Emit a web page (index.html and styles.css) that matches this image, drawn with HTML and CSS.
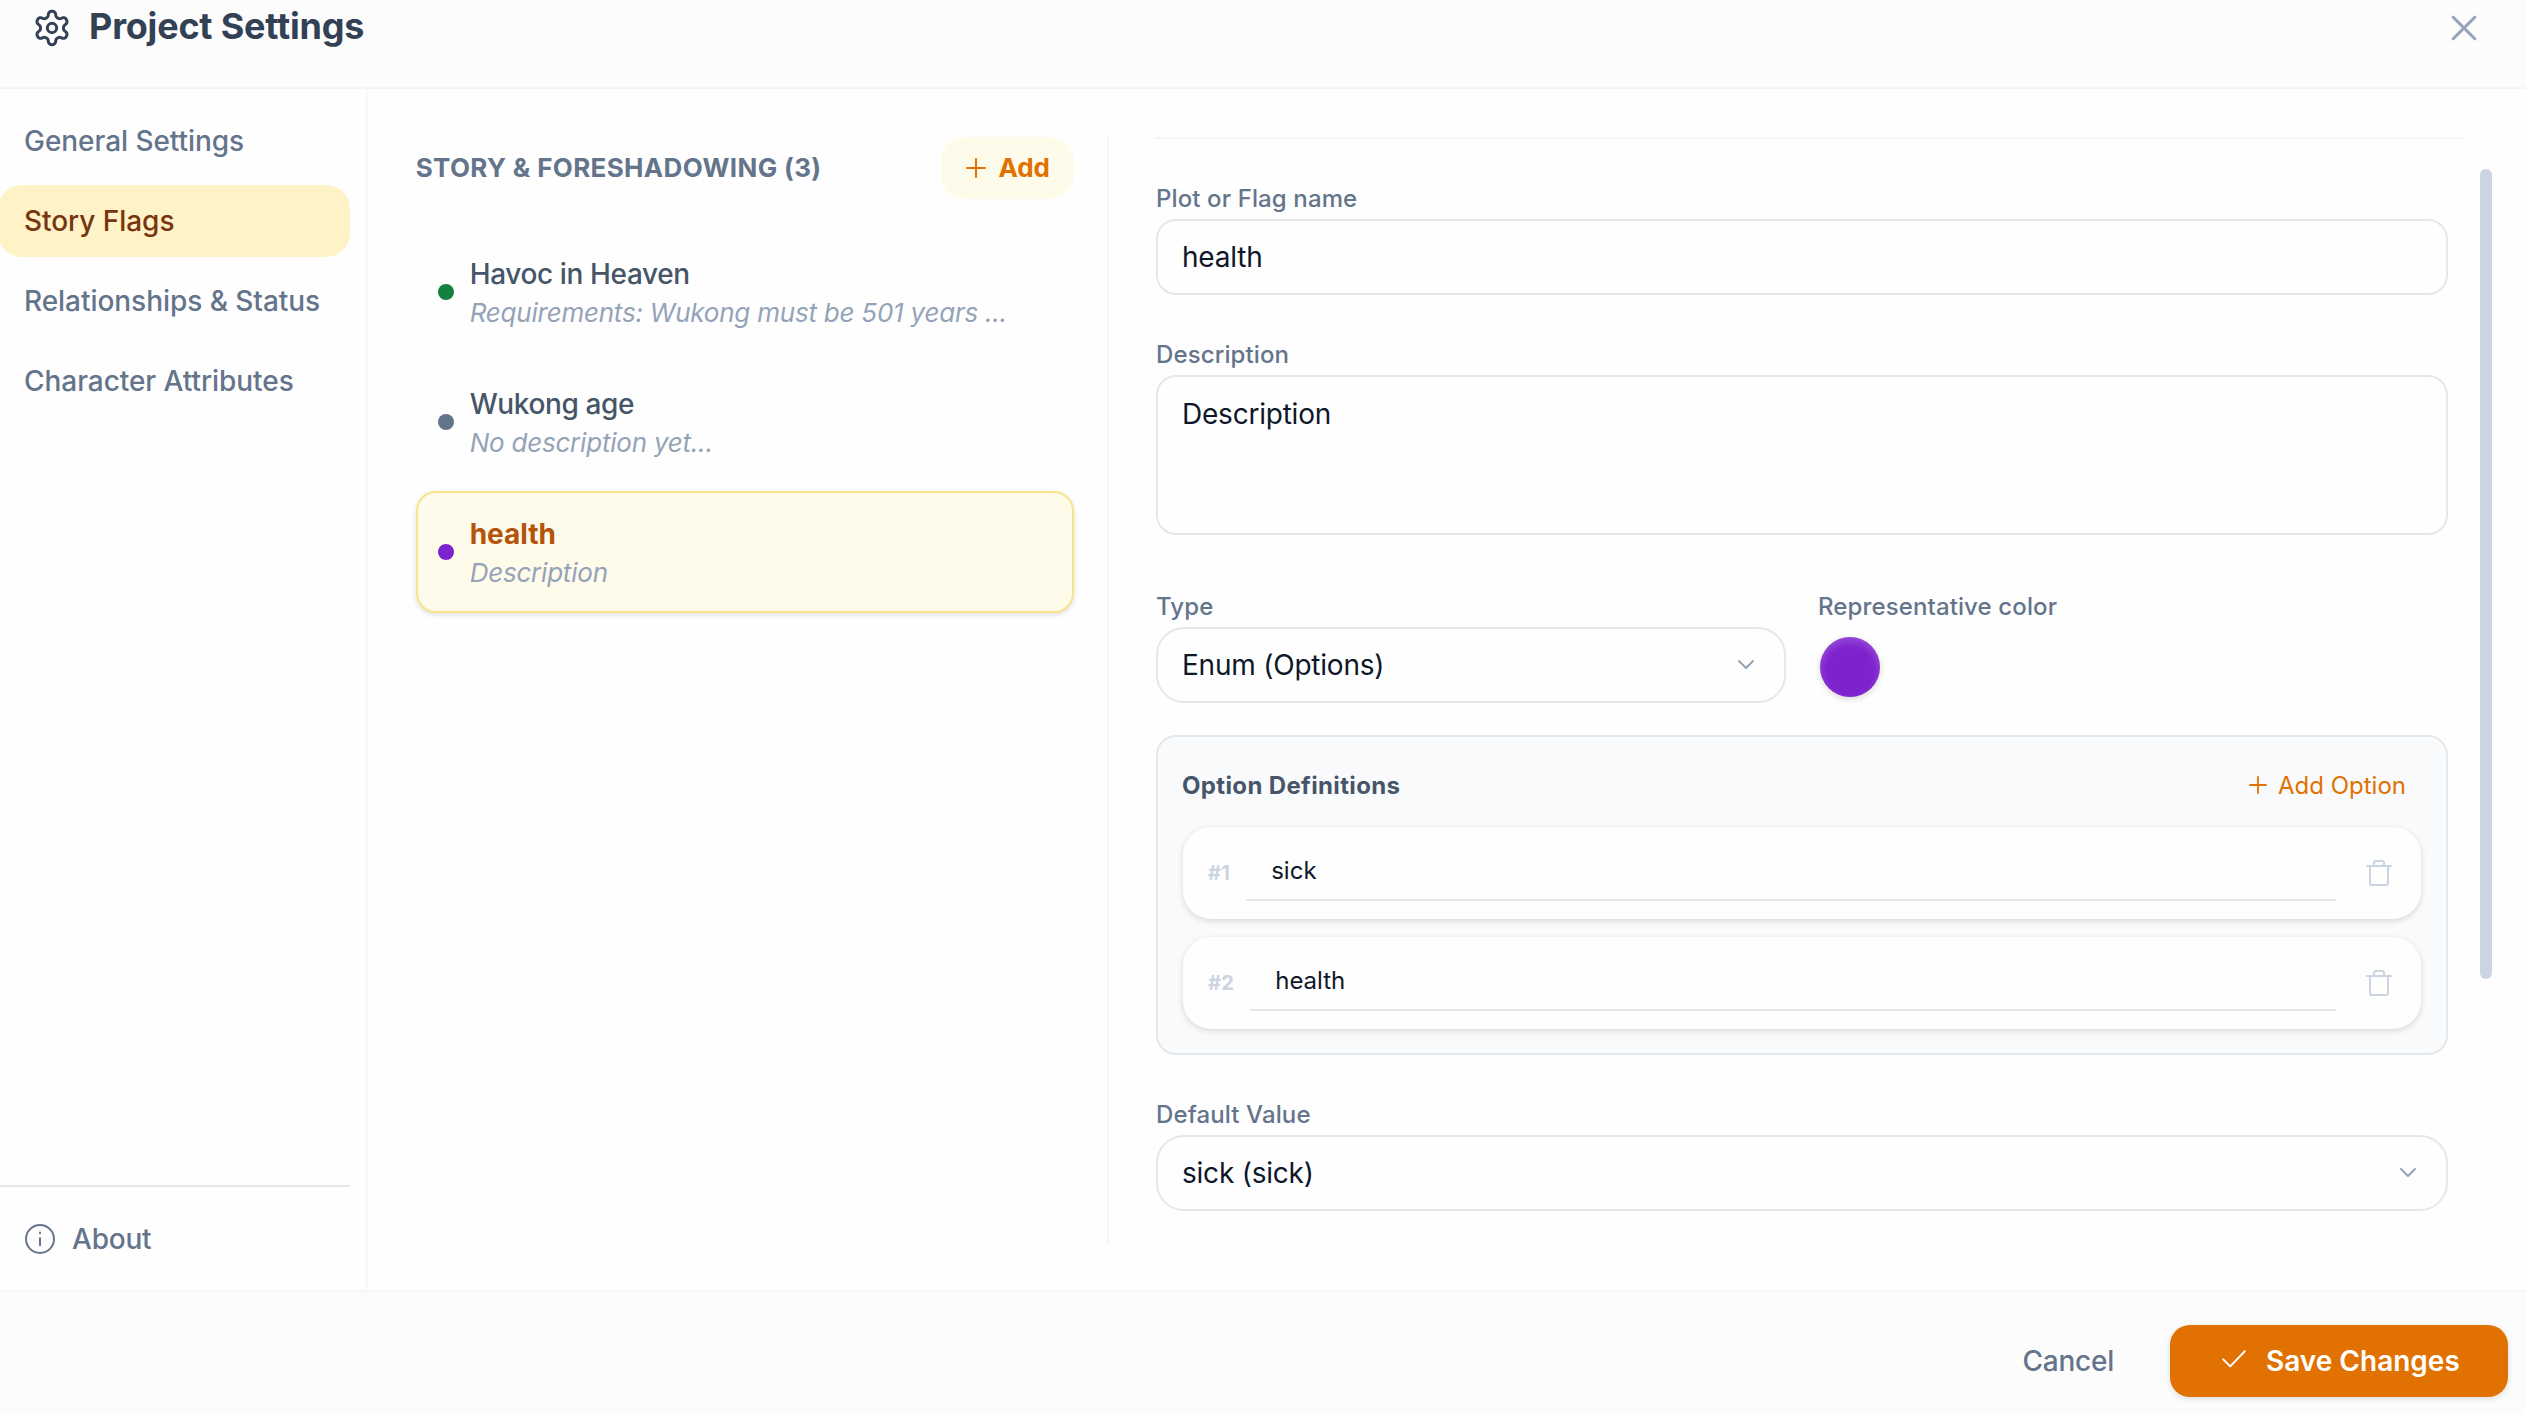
FILE: index.html
```html
<!DOCTYPE html>
<html lang="en">
<head>
  <meta charset="UTF-8">
  <title>Project Settings</title>
  <link rel="stylesheet" href="styles.css">
</head>
<body>

  <header class="header">
    <svg class="icon-gear" viewBox="0 0 24 24">
      <path d="M12.22 2h-.44a2 2 0 0 0-2 2v.18a2 2 0 0 1-1 1.73l-.43.25a2 2 0 0 1-2 0l-.15-.08a2 2 0 0 0-2.73.73l-.22.38a2 2 0 0 0 .73 2.73l.15.1a2 2 0 0 1 1 1.72v.51a2 2 0 0 1-1 1.74l-.15.09a2 2 0 0 0-.73 2.73l.22.38a2 2 0 0 0 2.73.73l.15-.08a2 2 0 0 1 2 0l.43.25a2 2 0 0 1 1 1.73V20a2 2 0 0 0 2 2h.44a2 2 0 0 0 2-2v-.18a2 2 0 0 1 1-1.73l.43-.25a2 2 0 0 1 2 0l.15.08a2 2 0 0 0 2.73-.73l.22-.39a2 2 0 0 0-.73-2.73l-.15-.08a2 2 0 0 1-1-1.74v-.5a2 2 0 0 1 1-1.74l.15-.09a2 2 0 0 0 .73-2.73l-.22-.38a2 2 0 0 0-2.73-.73l-.15.08a2 2 0 0 1-2 0l-.43-.25a2 2 0 0 1-1-1.73V4a2 2 0 0 0-2-2z"/>
      <circle cx="12" cy="12" r="2.8"/>
    </svg>
    <h1>Project Settings</h1>
    <button class="close" aria-label="Close">
      <svg viewBox="0 0 24 24"><path d="M1.2 1.2l21.6 21.6M22.8 1.2L1.2 22.8"/></svg>
    </button>
  </header>

  <main class="main">
    <aside class="sidebar">
      <nav>
        <a class="nav-item">General Settings</a>
        <a class="nav-item active">Story Flags</a>
        <a class="nav-item">Relationships &amp; Status</a>
        <a class="nav-item">Character Attributes</a>
      </nav>
      <div class="about">
        <svg viewBox="0 0 30 30">
          <circle cx="15" cy="15" r="14"/>
          <path d="M15 14.2v7M15 8.6v.6"/>
        </svg>
        <span>About</span>
      </div>
    </aside>

    <section class="flags">
      <div class="flags-head">
        <h2>STORY &amp; FORESHADOWING (3)</h2>
        <button class="add">
          <svg class="plus" viewBox="0 0 18 18"><path d="M9 0v18M0 9h18"/></svg>
          <span>Add</span>
        </button>
      </div>
      <ul class="flag-list">
        <li class="flag">
          <i class="dot green"></i>
          <div class="flag-text">
            <strong>Havoc in Heaven</strong>
            <em>Requirements: Wukong must be 501 years ...</em>
          </div>
        </li>
        <li class="flag">
          <i class="dot slate"></i>
          <div class="flag-text">
            <strong>Wukong age</strong>
            <em>No description yet...</em>
          </div>
        </li>
        <li class="flag selected">
          <i class="dot purple"></i>
          <div class="flag-text">
            <strong>health</strong>
            <em>Description</em>
          </div>
        </li>
      </ul>
    </section>

    <section class="editor">
      <form class="form">
        <div class="field">
          <label for="name">Plot or Flag name</label>
          <input class="control" type="text" id="name" value="health">
        </div>

        <div class="field">
          <label for="description">Description</label>
          <textarea class="control" id="description">Description</textarea>
        </div>

        <div class="field-row">
          <div class="field type">
            <label for="type">Type</label>
            <div class="select">
              <select class="control" id="type"><option>Enum (Options)</option></select>
              <svg viewBox="0 0 16 10"><path d="M1 1l7 7 7-7"/></svg>
            </div>
          </div>
          <div class="field">
            <label>Representative color</label>
            <button type="button" class="swatch" aria-label="Pick a color"></button>
          </div>
        </div>

        <div class="options">
          <div class="options-head">
            <h3>Option Definitions</h3>
            <button type="button" class="add-option">
              <svg class="plus" viewBox="0 0 18 18"><path d="M9 0v18M0 9h18"/></svg>
              <span>Add Option</span>
            </button>
          </div>
          <div class="option">
            <b>#1</b>
            <input type="text" value="sick">
            <svg class="trash" viewBox="0 0 24 26"><path d="M0 6h24M7 6V3q0-2 2-2h6q2 0 2 2v3M3 6v17q0 2 2 2h14q2 0 2-2V6"/></svg>
          </div>
          <div class="option">
            <b>#2</b>
            <input type="text" value="health">
            <svg class="trash" viewBox="0 0 24 26"><path d="M0 6h24M7 6V3q0-2 2-2h6q2 0 2 2v3M3 6v17q0 2 2 2h14q2 0 2-2V6"/></svg>
          </div>
        </div>

        <div class="field">
          <label for="default">Default Value</label>
          <div class="select">
            <select class="control" id="default"><option>sick (sick)</option></select>
            <svg viewBox="0 0 16 10"><path d="M1 1l7 7 7-7"/></svg>
          </div>
        </div>
      </form>
      <div class="scrollbar"><div class="thumb"></div></div>
    </section>
  </main>

  <footer class="footer">
    <button class="cancel">Cancel</button>
    <button class="save">
      <svg viewBox="0 0 24 18"><path d="M1.2 9.4l7 7L22.8 1.2"/></svg>
      <span>Save Changes</span>
    </button>
  </footer>

</body>
</html>
```
FILE: styles.css
```css
/* Base */
* {
  box-sizing: border-box;
}

body {
  margin: 0;
  width: 2526px;
  height: 1414px;
  overflow: hidden;
  display: flex;
  flex-direction: column;
  background-color: #fefefe;
  color: #64748b;
  font-family: Inter, sans-serif;
  font-size: 28px;
  letter-spacing: 0;
}

h1, h2, h3, ul {
  margin: 0;
  padding: 0;
}

button, input, textarea, select {
  font: inherit;
  letter-spacing: inherit;
  color: inherit;
  border: none;
  background: none;
  padding: 0;
  outline: none;
}

svg {
  display: block;
  flex: none;
  overflow: visible;
  fill: none;
  stroke: currentColor;
  stroke-width: 2;
  stroke-linecap: round;
  stroke-linejoin: round;
}

/* Header */
.header {
  height: 89px;
  flex: none;
  display: flex;
  align-items: flex-start;
  padding: 5px 50px 0 32px;
  background-color: #fcfcfd;
  border-bottom: 2px solid #f3f5f7;
  color: #334155;
}

.icon-gear {
  width: 40px;
  height: 40px;
  margin-top: 3px;
  stroke-width: 1.8;
}

h1 {
  margin-left: 17px;
  font-size: 36px;
  line-height: 42px;
  font-weight: 700;
  letter-spacing: -0.2px;
}

.close {
  margin: 11px 0 0 auto;
  color: #94a3b8;
}

.close svg {
  width: 24px;
  height: 24px;
  stroke-width: 3;
}

/* Sidebar */
.main {
  flex: 1;
  display: flex;
  min-height: 0;
}

.sidebar {
  width: 368px;
  padding: 16px 16px 0 0;
  border-right: 2px solid #f5f8f9;
  display: flex;
  flex-direction: column;
  font-weight: 500;
}

nav {
  display: flex;
  flex-direction: column;
  gap: 8px;
  margin-left: -2px;
}

.nav-item {
  height: 72px;
  padding-left: 26px;
  line-height: 73px;
  letter-spacing: -0.05px;
  border-radius: 24px;
}

.nav-item.active {
  background-color: #fef3c7;
  color: #78350f;
}

.about {
  margin-top: auto;
  height: 105px;
  padding: 0 0 0 25px;
  display: flex;
  align-items: center;
  gap: 17px;
  border-top: 2px solid #e5e8ec;
  letter-spacing: -0.2px;
}

.about svg {
  width: 30px;
  height: 30px;
}

/* Flag list */
.flags {
  width: 740px;
  padding: 48px 33px 0 48px;
}

.flags-head {
  display: flex;
  align-items: center;
  justify-content: space-between;
  line-height: 30px;
}

h2 {
  padding-bottom: 1px;
  font-size: 26px;
  font-weight: 700;
  letter-spacing: 0.35px;
}

.add {
  height: 62px;
  padding: 0 24px 1px 26px;
  display: flex;
  align-items: center;
  gap: 13px;
  border-radius: 24px;
  background-color: #fffbeb;
  color: #e17100;
  font-size: 26px;
  font-weight: 700;
}

.plus {
  width: 18px;
  height: 18px;
}

.flag-list {
  margin-top: 32px;
  list-style: none;
  display: flex;
  flex-direction: column;
  gap: 8px;
}

.flag {
  height: 122px;
  padding: 0 20px;
  display: flex;
  align-items: center;
  gap: 16px;
  border: 2px solid transparent;
  border-radius: 20px;
}

.flag.selected {
  background-color: #fffbeb;
  border-color: #f8e48c;
  box-shadow: 0 2px 5px rgba(0, 0, 0, 0.12);
}

.dot {
  width: 16px;
  height: 16px;
  border-radius: 50%;
}

.dot.green { background-color: #15803d; }
.dot.slate { background-color: #64748b; }
.dot.purple { background-color: #7e22ce; }

.flag-text {
  padding-top: 1px;
}

.flag-text strong, .flag-text em {
  display: block;
  line-height: 39px;
}

.flag-text strong {
  color: #475569;
  font-weight: 500;
  letter-spacing: -0.37px;
  line-height: 40px;
}

.flag-text em {
  line-height: 38px;
  color: #94a3b8;
  font-size: 26px;
  letter-spacing: -0.22px;
}

.flag.selected strong {
  color: #b45309;
  font-weight: 700;
  letter-spacing: 0;
}

/* Editor */
.editor {
  flex: 1;
  display: flex;
  margin: 48px 34px 45px 0;
  padding-left: 47px;
  border-left: 2px solid #f3f5f7;
}

.form {
  width: 1309px;
  padding: 44px 17px 0 0;
  border-top: 2px solid #f3f5f7;
}

.field {
  margin-bottom: 44px;
}

label {
  display: block;
  height: 36px;
  line-height: 32px;
  font-size: 24px;
  font-weight: 500;
  letter-spacing: 0.12px;
}

.control {
  display: block;
  width: 100%;
  height: 76px;
  padding: 0 24px;
  border: 2px solid #e5e8eb;
  border-radius: 20px;
  color: #0f172a;
  letter-spacing: -0.22px;
}

textarea.control {
  height: 160px;
  padding-top: 17px;
  line-height: 40px;
  resize: none;
}

.select {
  display: flex;
  align-items: center;
}

.select select {
  appearance: none;
  border-radius: 28px;
}

.select svg {
  width: 16px;
  height: 10px;
  margin-left: -48px;
  margin-right: 32px;
  color: #94a3b8;
}

.field-row {
  display: flex;
  gap: 32px;
  margin-top: 56px;
}

.field-row .field {
  margin-bottom: 32px;
}

.type {
  width: 630px;
}

.swatch {
  width: 60px;
  height: 60px;
  margin: 10px 0 0 2px;
  border-radius: 50%;
  background-color: #7e22ce;
  box-shadow: inset 0 4px 8px rgba(255, 255, 255, 0.2), 0 2px 6px rgba(0, 0, 0, 0.16);
}

.field-row .field:last-child {
  height: 108px;
}

/* Option definitions */
.options {
  height: 320px;
  margin-bottom: 44px;
  padding: 24px 25px;
  border: 2px solid #e5e8eb;
  border-radius: 20px;
  background-color: #f9fafc;
}

.options-head {
  height: 48px;
  display: flex;
  align-items: center;
  justify-content: space-between;
  margin: 0 0 18px -1px;
  font-size: 24px;
}

h3 {
  color: #475569;
  font-size: 24px;
  font-weight: 700;
  letter-spacing: 0.35px;
}

.add-option {
  display: flex;
  align-items: center;
  gap: 12px;
  padding-right: 15px;
  color: #e17100;
}

.add-option .plus {
  width: 16px;
  height: 16px;
}

.option {
  height: 92px;
  padding: 0 30px 0 25px;
  display: flex;
  align-items: center;
  border-radius: 28px;
  background-color: #fefefe;
  box-shadow: 0 2px 6px rgba(0, 0, 0, 0.14);
}

.option + .option {
  margin-top: 18px;
}

.option b {
  color: #cbd5e1;
  font-size: 20px;
  font-weight: 700;
  letter-spacing: 0.3px;
}

.option input {
  flex: 1;
  height: 60px;
  margin: 0 31px 5px 16px;
  padding: 1px 25px 0;
  border-bottom: 2px solid #e5e8eb;
  color: #0f172a;
  font-size: 24px;
}

.trash {
  width: 24px;
  height: 26px;
  color: #cbd5e1;
}

/* Scrollbar */
.scrollbar {
  margin-left: 15px;
  padding-top: 32px;
}

.thumb {
  width: 12px;
  height: 810px;
  border-radius: 6px;
  background-color: #cbd5e1;
}

/* Footer */
.footer {
  height: 124px;
  flex: none;
  display: flex;
  justify-content: flex-end;
  align-items: center;
  gap: 56px;
  padding: 16px 18px 0 0;
  border-top: 2px solid #f5f6f7;
  background-color: #fcfcfc;
}

.cancel {
  font-weight: 500;
  letter-spacing: -0.25px;
}

.save {
  width: 338px;
  height: 72px;
  padding-left: 52px;
  display: flex;
  align-items: center;
  gap: 20px;
  border-radius: 20px;
  background-color: #e17100;
  color: #fff;
  font-weight: 600;
  box-shadow: 0 2px 6px rgba(0, 0, 0, 0.12);
}

.save svg {
  width: 24px;
  height: 18px;
  margin-bottom: 4px;
}
```
